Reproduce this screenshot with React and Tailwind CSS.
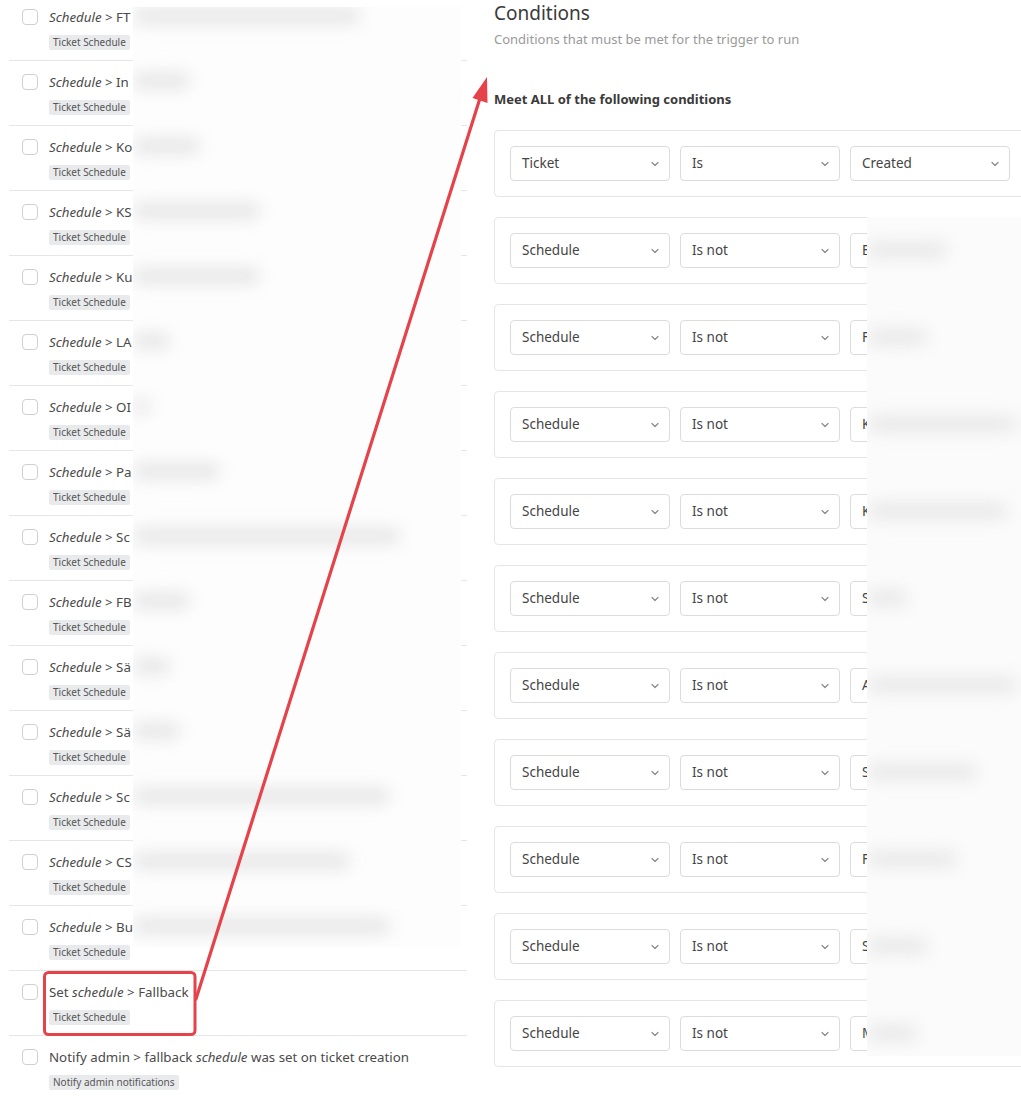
import React from "react";

const leftRows = [
  { pre: "FT", blur: 227 },
  { pre: "In", blur: 57 },
  { pre: "Ko", blur: 67 },
  { pre: "KS", blur: 127 },
  { pre: "Ku", blur: 127 },
  { pre: "LA", blur: 37 },
  { pre: "OI", blur: 17 },
  { pre: "Pa", blur: 87 },
  { pre: "Sc", blur: 267 },
  { pre: "FB", blur: 57 },
  { pre: "Sä", blur: 37 },
  { pre: "Sä", blur: 47 },
  { pre: "Sc", blur: 257 },
  { pre: "CS", blur: 217 },
  { pre: "Bu", blur: 257 },
];

const conds = [
  ["Ticket", "Is", "Created"],
  ["Schedule", "Is not", "B"],
  ["Schedule", "Is not", "F"],
  ["Schedule", "Is not", "K"],
  ["Schedule", "Is not", "K"],
  ["Schedule", "Is not", "S"],
  ["Schedule", "Is not", "A"],
  ["Schedule", "Is not", "S"],
  ["Schedule", "Is not", "F"],
  ["Schedule", "Is not", "S"],
  ["Schedule", "Is not", "M"],
];

const rightBlur = [80, 60, 150, 140, 40, 150, 110, 90, 60, 50];

function Checkbox() {
  return (
    <div className="w-[16px] h-[16px] rounded-[4px] border border-[#cfcfcf] bg-white shrink-0 mt-[2px]" />
  );
}

function Badge({ children }) {
  return (
    <span className="inline-block bg-[#e9eaec] text-[#555] text-[10px] leading-[15px] h-[15px] px-[4px] rounded-[2px]">
      {children}
    </span>
  );
}

function Row({ title, badge, last }) {
  return (
    <div className={"flex h-[65px] pt-[11px] pl-[13px] gap-[11px] " + (last ? "" : "border-b border-[#e6e6e6]")}>
      <Checkbox />
      <div className="flex flex-col">
        <div className="text-[13.3px] leading-[20px] text-[#4a4a4a] whitespace-nowrap">{title}</div>
        <div className="mt-[6px] leading-[15px]">
          <Badge>{badge}</Badge>
        </div>
      </div>
    </div>
  );
}

function Chevron() {
  return (
    <svg width="10" height="10" viewBox="0 0 10 10" className="shrink-0">
      <path d="M2 3.5 L5 6.5 L8 3.5" fill="none" stroke="#8a8a8a" strokeWidth="1.2" strokeLinecap="round" strokeLinejoin="round" />
    </svg>
  );
}

function Select({ value }) {
  return (
    <div className="w-[160px] h-[35px] border border-[#dcdcdc] rounded-[4px] bg-white flex items-center justify-between pl-[11px] pr-[9px] shrink-0">
      <span className="text-[13.5px] text-[#444]">{value}</span>
      <Chevron />
    </div>
  );
}

export default function App() {
  return (
    <div
      className="relative w-[1021px] h-[1097px] overflow-hidden bg-white"
      style={{ fontFamily: '"Noto Sans", "Open Sans", sans-serif' }}
    >
      <div className="flex gap-[27px]">
        {/* Left column */}
        <div className="ml-[9px] w-[458px] -mt-[4px] shrink-0">
          {leftRows.map((r, i) => (
            <Row
              key={i}
              title={
                <>
                  <i>Schedule</i> &gt; {r.pre}
                </>
              }
              badge="Ticket Schedule"
            />
          ))}
          <Row
            title={
              <>
                Set <i>schedule</i> &gt; Fallback
              </>
            }
            badge="Ticket Schedule"
          />
          <Row
            last
            title={
              <>
                Notify admin &gt; fallback <i>schedule</i> was set on ticket creation
              </>
            }
            badge="Notify admin notifications"
          />
        </div>

        {/* Right column */}
        <div className="flex flex-col shrink-0">
          <div className="text-[19px] leading-[26px] text-[#3a3a3a]">Conditions</div>
          <div className="mt-[4px] text-[13px] leading-[18px] text-[#9a9a9a]">
            Conditions that must be met for the trigger to run
          </div>
          <div className="mt-[42px] text-[13px] leading-[18px] font-bold text-[#3a3a3a]">
            Meet ALL of the following conditions
          </div>
          <div className="mt-[22px] flex flex-col gap-[20px]">
            {conds.map((c, i) => (
              <div
                key={i}
                className="w-[540px] h-[67px] border border-[#e6e6e6] rounded-[4px] pt-[15px] pl-[15px] flex gap-[10px]"
              >
                {c.map((v, j) => (
                  <Select key={j} value={v} />
                ))}
              </div>
            ))}
          </div>
        </div>
      </div>

      {/* Left blur overlay */}
      <div className="absolute left-[133px] top-[7px] w-[328px] h-[940px] bg-[#fdfdfd] overflow-hidden">
        {leftRows.map((r, i) => (
          <div
            key={i}
            className="absolute left-[0px] h-[16px] bg-[#e6e6e6] rounded-full blur-[8px]"
            style={{ top: 1 + 65 * i + "px", width: r.blur + "px" }}
          />
        ))}
      </div>

      {/* Right blur overlay */}
      <div className="absolute left-[867px] top-[217px] w-[154px] h-[839px] bg-[#fbfbfb] overflow-hidden">
        {rightBlur.map((w, i) => (
          <div
            key={i}
            className="absolute left-[0px] h-[16px] bg-[#e8e8e8] rounded-full blur-[8px]"
            style={{ top: 25 + 87 * i + "px", width: w + "px" }}
          />
        ))}
      </div>

      {/* Annotation */}
      <svg className="absolute left-0 top-0 pointer-events-none" width="1021" height="1097" viewBox="0 0 1021 1097">
        <rect x="44.5" y="972.5" width="150.5" height="62" rx="4" fill="none" stroke="#e5424a" strokeWidth="3" />
        <line x1="196" y1="999" x2="481" y2="95" stroke="#e5424a" strokeWidth="3.2" strokeLinecap="round" />
        <polygon points="487,77 472.5,98 487.5,103" fill="#e5424a" />
      </svg>
    </div>
  );
}
